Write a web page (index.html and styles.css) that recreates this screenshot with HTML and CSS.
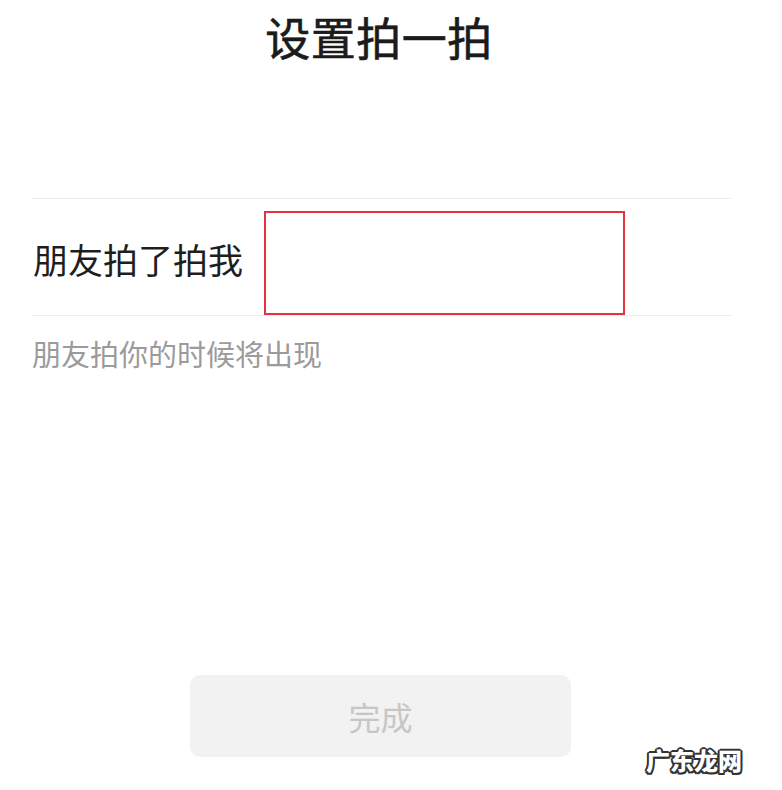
FILE: index.html
```html
<!DOCTYPE html>
<html lang="zh-CN">
<head>
<meta charset="utf-8">
<title>设置拍一拍</title>
<link rel="stylesheet" href="styles.css">
</head>
<body>
<div class="page">
  <header class="header">
    <h1 class="title">设置拍一拍</h1>
  </header>
  <div class="row">
    <span class="label">朋友拍了拍我</span>
    <div class="input-box"></div>
  </div>
  <p class="hint">朋友拍你的时候将出现</p>
  <div class="btn-wrap">
    <button class="done-btn" type="button">完成</button>
  </div>
  <div class="watermark">广东龙网</div>
</div>
</body>
</html>
```

FILE: styles.css
```css
html, body {
  margin: 0;
  padding: 0;
  background: #ffffff;
}
body {
  font-family: "Noto Sans CJK SC", "Noto Sans", sans-serif;
  color: #1a1a1a;
}
.page {
  position: relative;
  width: 782px;
  height: 790px;
  overflow: hidden;
  display: flex;
  flex-direction: column;
}
.header {
  height: 74px;
  margin-bottom: 124px;
  display: flex;
  justify-content: center;
  align-items: center;
  padding-right: 24px;
}
.title {
  margin: 0;
  font-size: 45px;
  font-weight: 400;
  line-height: 72px;
  color: #1b1b1b;
  letter-spacing: 0.5px;
  -webkit-text-stroke: 0.6px #1b1b1b;
}
.row {
  position: relative;
  margin: 0 51px 0 32px;
  height: 118px;
  box-sizing: border-box;
  border-top: 1px solid #ececec;
  border-bottom: 1px solid #ececec;
  display: flex;
  align-items: center;
  padding-top: 4px;
}
.label {
  font-size: 35px;
  line-height: 40px;
  color: #1e1e1e;
  padding-left: 1px;
}
.input-box {
  position: absolute;
  left: 232px;
  top: 12px;
  width: 361px;
  height: 104px;
  box-sizing: border-box;
  border: 2px solid #e2333f;
}
.hint {
  margin: 17px 0 0 32px;
  font-size: 29px;
  line-height: 40px;
  color: #9b9b9b;
}
.btn-wrap {
  margin-top: 302px;
  padding-left: 190px;
}
.done-btn {
  width: 381px;
  height: 82px;
  border: none;
  border-radius: 10px;
  background: #f2f2f2;
  color: #c6c6c6;
  font-family: "Noto Sans CJK SC", "Noto Sans", sans-serif;
  font-size: 32px;
  padding: 0;
}
.watermark {
  position: absolute;
  left: 646px;
  top: 744px;
  font-size: 24px;
  font-weight: 900;
  line-height: 32px;
  color: #ffffff;
  letter-spacing: 0;
  text-shadow:
    -1.5px -1.5px 0 #333, 1.5px -1.5px 0 #333,
    -1.5px 1.5px 0 #333, 1.5px 1.5px 0 #333,
    0 -2px 0 #333, 0 2px 0 #333,
    -2px 0 0 #333, 2px 0 0 #333;
}
```
